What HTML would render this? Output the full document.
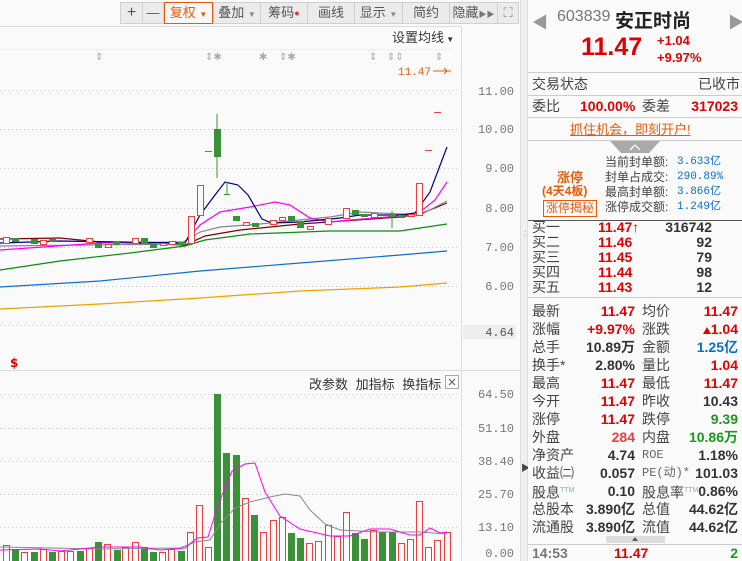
<!DOCTYPE html>
<html><head><meta charset="utf-8"><style>
*{margin:0;padding:0;box-sizing:border-box}
body{width:742px;height:561px;background:#fafafa;font-family:"Liberation Sans","Noto Sans CJK SC",sans-serif;position:relative;overflow:hidden;font-size:13px}
.a{position:absolute;white-space:nowrap}
.tb{position:absolute;top:2px;height:22px;background:#ebebeb;border:1px solid #cfcfcf;font-size:13px;color:#555;text-align:center;line-height:20px}
.r{color:#e00000;font-weight:bold}
.g{color:#1a9a1a;font-weight:bold}
.b{color:#0a6fd0}
.lab{color:#444}
.row{position:absolute;left:532px;width:208px;height:18px;font-size:14px;line-height:18px}
.row span{position:absolute}
.mono{font-family:"Liberation Mono","DejaVu Sans Mono",monospace;color:#666;font-size:12px}
</style></head><body>
<svg class="a" style="left:0;top:0" width="520" height="561" viewBox="0 0 520 561">
<rect x="0" y="0" width="520" height="561" fill="#fafafa"/>
<line x1="0" y1="26.5" x2="461" y2="26.5" stroke="#ddd"/>
<line x1="0" y1="49.5" x2="452" y2="49.5" stroke="#eee"/>
<line x1="461.5" y1="26" x2="461.5" y2="561" stroke="#ddd"/>
<line x1="0" y1="370.5" x2="520" y2="370.5" stroke="#ddd"/>
<g stroke="#c8c8c8" stroke-dasharray="1,3">
<line x1="0" y1="90.5" x2="458" y2="90.5"/><line x1="0" y1="129.5" x2="458" y2="129.5"/><line x1="0" y1="168.5" x2="458" y2="168.5"/><line x1="0" y1="208.5" x2="458" y2="208.5"/><line x1="0" y1="247.5" x2="458" y2="247.5"/><line x1="0" y1="286.5" x2="458" y2="286.5"/><line x1="0" y1="325.5" x2="458" y2="325.5"/>
<line x1="0" y1="394.5" x2="458" y2="394.5"/><line x1="0" y1="428.5" x2="458" y2="428.5"/><line x1="0" y1="461.5" x2="458" y2="461.5"/><line x1="0" y1="494.5" x2="458" y2="494.5"/><line x1="0" y1="527.5" x2="458" y2="527.5"/>
</g>
<g font-family="Liberation Mono,monospace" font-size="12" fill="#777" text-anchor="end">
<text x="514" y="95">11.00</text><text x="514" y="133">10.00</text><text x="514" y="172">9.00</text><text x="514" y="212">8.00</text><text x="514" y="251">7.00</text><text x="514" y="290">6.00</text>
<text x="514" y="398">64.50</text><text x="514" y="432">51.10</text><text x="514" y="465">38.40</text><text x="514" y="498">25.70</text><text x="514" y="531">13.10</text><text x="514" y="557">0.00</text>
</g>
<rect x="463" y="325" width="53" height="14" fill="#eee"/>
<text x="514" y="336" font-family="Liberation Mono,monospace" font-size="12" fill="#555" text-anchor="end">4.64</text>
<g fill="#aaa" font-size="10" font-family="DejaVu Sans">
<text x="95" y="60">⇕</text><text x="205" y="60">⇕✱</text><text x="259" y="60">✱</text><text x="279" y="60">⇕✱</text><text x="369" y="60">⇕</text><text x="387" y="60">⇕⇕</text><text x="435" y="60">⇕</text>
</g>
<text x="398" y="75" font-family="Liberation Mono,monospace" font-size="11" fill="#e85a0a">11.47</text>
<path d="M433 71H451M444 68L447 71L444 74" stroke="#e85a0a" fill="none"/>
<g fill="none" stroke-width="1.2">
<polyline stroke="#f0a000" points="0,309 100,304 200,298 300,291 400,287 447,283"/>
<polyline stroke="#0a70d0" points="0,287 100,281 200,271 300,263 400,255 447,251"/>
<polyline stroke="#108a10" points="0,270 60,261 130,253 185,246 205,240 250,234 330,231 400,231 420,228 447,224"/>
<polyline stroke="#800000" points="0,239 60,238 100,242 185,245 205,236 240,230 300,224 400,217 420,214 447,203"/>
<polyline stroke="#888" points="0,246 180,244 200,232 220,227 260,224 300,220 330,217 360,212 400,214 420,215 447,201"/>
<polyline stroke="#ff00ff" points="0,250 100,243 185,242 200,225 220,212 250,207 275,202 290,205 310,218 330,222 350,220 400,216 420,212 435,200 447,182"/>
<polyline stroke="#000080" points="0,243 60,241 185,243 200,215 215,195 225,182 238,185 248,195 262,219 272,223 300,222 340,218 360,215 400,215 415,213 430,192 447,147"/>
</g>
<g stroke="#e84040" fill="#fafafa">
<rect x="3.5" y="237.5" width="6" height="6"/><rect x="40.5" y="240.5" width="6" height="4"/><rect x="86.5" y="238.5" width="6" height="4"/><rect x="105.5" y="244.5" width="6" height="3"/><rect x="132.5" y="238.5" width="6" height="5"/><rect x="160.5" y="243.5" width="6" height="2"/><rect x="169.5" y="241.5" width="6" height="3"/>
<rect x="188.5" y="216.5" width="6" height="27"/><rect x="197.5" y="185.5" width="6" height="30"/>
<rect x="243.5" y="222.5" width="6" height="3"/><rect x="270.5" y="220.5" width="6" height="4"/><rect x="279.5" y="217.5" width="6" height="3"/><rect x="307.5" y="226.5" width="6" height="3"/><rect x="325.5" y="218.5" width="6" height="6"/><rect x="343.5" y="208.5" width="6" height="10"/><rect x="371.5" y="213.5" width="6" height="4"/><rect x="408.5" y="214.5" width="6" height="2"/><rect x="416.5" y="183.5" width="6" height="32"/>
<line x1="205" y1="151.5" x2="212" y2="151.5"/><line x1="425" y1="150.5" x2="432" y2="150.5"/><line x1="434" y1="112.5" x2="441" y2="112.5"/>
</g>
<g fill="#3a913a" stroke="#3a913a">
<rect x="12.5" y="238.5" width="6" height="3"/><rect x="31.5" y="239.5" width="6" height="4"/><rect x="49.5" y="239.5" width="6" height="2"/><rect x="95.5" y="243.5" width="6" height="4"/><rect x="113.5" y="241.5" width="6" height="3"/><rect x="141.5" y="238.5" width="6" height="5"/><rect x="150.5" y="244.5" width="6" height="3"/><rect x="178.5" y="242.5" width="6" height="2"/>
<line x1="217" y1="114" x2="217" y2="178"/><rect x="214.5" y="129.5" width="6" height="27"/>
<line x1="227" y1="182" x2="227" y2="194"/><line x1="224" y1="194.5" x2="230" y2="194.5"/>
<rect x="233.5" y="216.5" width="6" height="4"/><rect x="252.5" y="223.5" width="6" height="3"/><rect x="288.5" y="216.5" width="6" height="4"/><rect x="297.5" y="221.5" width="6" height="6"/><rect x="352.5" y="210.5" width="6" height="4"/><rect x="361.5" y="214.5" width="6" height="2"/><rect x="389.5" y="214.5" width="6" height="2"/><line x1="392" y1="211" x2="392" y2="228"/><rect x="398.5" y="215.5" width="6" height="2"/>
</g>
<text x="10" y="367" font-size="12" font-weight="bold" fill="#e00000" font-family="DejaVu Sans">$</text>
<g stroke="#e84040" fill="#fafafa">
<rect x="3.5" y="545.5" width="6" height="16"/><rect x="21.5" y="552.5" width="6" height="9"/><rect x="40.5" y="549.5" width="6" height="12"/><rect x="58.5" y="551.5" width="6" height="10"/><rect x="67.5" y="551.5" width="6" height="10"/><rect x="86.5" y="548.5" width="6" height="13"/><rect x="104.5" y="544.5" width="6" height="17"/><rect x="122.5" y="547.5" width="6" height="14"/><rect x="132.5" y="542.5" width="6" height="19"/><rect x="159.5" y="552.5" width="6" height="9"/><rect x="168.5" y="549.5" width="6" height="12"/><rect x="187.5" y="532.5" width="6" height="29"/><rect x="196.5" y="505.5" width="6" height="56"/><rect x="205.5" y="547.5" width="6" height="14"/>
<rect x="242.5" y="498.5" width="6" height="63"/><rect x="260.5" y="532.5" width="6" height="29"/><rect x="270.5" y="520.5" width="6" height="41"/><rect x="279.5" y="517.5" width="6" height="44"/><rect x="306.5" y="543.5" width="6" height="18"/><rect x="315.5" y="541.5" width="6" height="20"/><rect x="325.5" y="525.5" width="6" height="36"/><rect x="334.5" y="536.5" width="6" height="25"/><rect x="343.5" y="512.5" width="6" height="49"/><rect x="370.5" y="530.5" width="6" height="31"/><rect x="398.5" y="543.5" width="6" height="18"/><rect x="407.5" y="539.5" width="6" height="22"/><rect x="416.5" y="501.5" width="6" height="60"/><rect x="425.5" y="547.5" width="6" height="14"/><rect x="434.5" y="540.5" width="6" height="21"/><rect x="444.5" y="532.5" width="6" height="29"/>
</g>
<g fill="#3a913a">
<rect x="12" y="549" width="7" height="12"/><rect x="31" y="552" width="7" height="9"/><rect x="49" y="552" width="7" height="9"/><rect x="77" y="551" width="7" height="10"/><rect x="95" y="542" width="7" height="19"/><rect x="114" y="550" width="7" height="11"/><rect x="141" y="547" width="7" height="14"/><rect x="150" y="552" width="7" height="9"/><rect x="178" y="551" width="7" height="10"/>
<rect x="214" y="394" width="7" height="167"/><rect x="223" y="453" width="7" height="108"/><rect x="233" y="455" width="7" height="106"/><rect x="251" y="515" width="7" height="46"/><rect x="288" y="533" width="7" height="28"/><rect x="297" y="538" width="7" height="23"/><rect x="352" y="533" width="7" height="28"/><rect x="361" y="539" width="7" height="22"/><rect x="379" y="532" width="7" height="29"/><rect x="389" y="532" width="7" height="29"/>
</g>
<g fill="none" stroke-width="1">
<polyline stroke="#888" points="0,547 50,548 100,549 180,548 195,542 210,540 220,524 235,508 250,502 270,497 285,494 300,496 310,510 325,524 340,530 380,532 420,532 447,534"/>
<polyline stroke="#ff00ff" points="0,550 40,549 60,551 100,547 140,547 160,550 185,548 197,538 208,537 214,518 222,495 232,471 245,464 255,463 265,492 280,516 300,529 330,536 350,536 370,529 390,529 410,535 420,535 430,528 440,533 447,532"/>
</g>
<rect x="445.5" y="375.5" width="13" height="13" fill="none" stroke="#aaa"/>
<path d="M449 379L455 385M455 379L449 385" stroke="#555"/>
</svg>
<div class="tb" style="left:120px;width:23px;font-size:16px">+</div>
<div class="tb" style="left:142px;width:22px">—</div>
<div class="tb" style="left:164px;width:49px;border:1px solid #e85a0a;color:#e85a0a;background:#f7f7f7">复权 <span style="font-size:8px">▼</span></div>
<div class="tb" style="left:213px;width:48px">叠加 <span style="font-size:8px;color:#888">▼</span></div>
<div class="tb" style="left:260px;width:48px">筹码<span style="color:#f03030;font-size:9px;vertical-align:top">●</span></div>
<div class="tb" style="left:307px;width:48px">画线</div>
<div class="tb" style="left:354px;width:49px">显示 <span style="font-size:8px;color:#888">▼</span></div>
<div class="tb" style="left:402px;width:48px">简约</div>
<div class="tb" style="left:449px;width:49px">隐藏<span style="font-size:8px;color:#777">▶▶</span></div>
<div class="tb" style="left:497px;width:22px;color:#888">⛶</div>
<div class="a" style="left:392px;top:29px;width:61px;height:18px;background:#fff;font-size:13px;color:#333;line-height:18px">设置均线<span style="font-size:8px"> ▼</span></div>
<div class="a" style="left:309px;top:374px;font-size:13px;color:#333;word-spacing:4px">改参数 加指标 换指标</div>
<div class="a" style="left:520px;top:0;width:8px;height:561px;background:#f0f0f0;border-left:1px solid #ddd;border-right:1px solid #ddd"></div>
<div class="a" style="left:521px;top:230px;font-size:8px;color:#999">⋮</div>
<div class="a" style="left:521px;top:461px;font-size:9px;color:#444">▶</div>
<div class="a" style="left:528px;top:0;width:214px;height:561px;background:#fafafa"></div>
<div class="a" style="left:532px;top:9px;color:#999;font-size:16px">◀</div>
<div class="a" style="left:728px;top:9px;color:#999;font-size:16px">▶</div>
<div class="a" style="left:557px;top:8px;color:#777;font-size:16px">603839</div>
<div class="a" style="left:615px;top:6px;color:#222;font-size:19px;font-weight:bold">安正时尚</div>
<div class="a r" style="left:581px;top:33px;font-size:25px">11.47</div>
<div class="a r" style="left:657px;top:33px;font-size:13px">+1.04</div>
<div class="a r" style="left:657px;top:50px;font-size:13px">+9.97%</div>
<div class="a" style="left:528px;top:72px;width:214px;border-top:1px solid #ccc"></div>
<div class="row" style="top:75px"><span class="lab" style="left:0">交易状态</span><span class="lab" style="right:0">已收市</span></div>
<div class="a" style="left:528px;top:95px;width:214px;border-top:1px solid #ccc"></div>
<div class="row" style="top:97px"><span class="lab" style="left:0">委比</span><span class="r" style="left:48px">100.00%</span><span class="lab" style="left:110px">委差</span><span class="r" style="right:2px">317023</span></div>
<div class="a" style="left:528px;top:117px;width:214px;border-top:1px solid #ccc"></div>
<div class="a" style="left:570px;top:119px;color:#e85a0a;font-size:13px;text-decoration:underline">抓住机会，即刻开户!</div>
<div class="a" style="left:528px;top:140px;width:214px;border-top:1px solid #ccc"></div>
<div class="a" style="left:610px;top:141px;width:50px;height:12px;background:#aaa;clip-path:polygon(0 0,100% 0,78% 100%,22% 100%)"></div>
<svg class="a" style="left:628px;top:143px" width="14" height="8"><path d="M2 7L7 2L12 7" stroke="#fff" fill="none" stroke-width="1.3"/></svg>
<div class="a" style="left:557px;top:167px;color:#e85a0a;font-weight:bold;font-size:13px">涨停</div>
<div class="a" style="left:542px;top:182px;color:#e85a0a;font-weight:bold;font-size:12px">(4天4板)</div>
<div class="a" style="left:543px;top:200px;border:1px solid #e85a0a;color:#e85a0a;font-size:12px;padding:0 2px;line-height:15px">涨停揭秘</div>
<div class="a" style="left:605px;top:155px;font-size:12px;color:#444;line-height:15px">当前封单额:<br>封单占成交:<br>最高封单额:<br>涨停成交额:</div>
<div class="a b" style="left:677px;top:155px;font-size:11px;line-height:15px;font-family:'Liberation Mono',monospace">3.633亿<br>290.89%<br>3.866亿<br>1.249亿</div>
<div class="a" style="left:528px;top:220px;width:214px;border-top:1px solid #555"></div>
<div class="row" style="top:220px;height:15px;line-height:15px"><span class="lab" style="left:0">买一</span><span class="r" style="left:66px">11.47<span style="font-weight:normal">↑</span></span><span style="right:28px;color:#333;font-weight:bold">316742</span></div>
<div class="row" style="top:235px;height:15px;line-height:15px"><span class="lab" style="left:0">买二</span><span class="r" style="left:66px">11.46</span><span style="right:28px;color:#333;font-weight:bold">92</span></div>
<div class="row" style="top:250px;height:15px;line-height:15px"><span class="lab" style="left:0">买三</span><span class="r" style="left:66px">11.45</span><span style="right:28px;color:#333;font-weight:bold">79</span></div>
<div class="row" style="top:265px;height:15px;line-height:15px"><span class="lab" style="left:0">买四</span><span class="r" style="left:66px">11.44</span><span style="right:28px;color:#333;font-weight:bold">98</span></div>
<div class="row" style="top:280px;height:15px;line-height:15px"><span class="lab" style="left:0">买五</span><span class="r" style="left:66px">11.43</span><span style="right:28px;color:#333;font-weight:bold">12</span></div>
<div class="a" style="left:528px;top:297px;width:214px;border-top:1px solid #ccc"></div>
<div class="row" style="top:302px"><span class="lab" style="left:0">最新</span><span class="r" style="right:105px">11.47</span><span class="lab" style="left:110px">均价</span><span class="r" style="right:2px">11.47</span></div>
<div class="row" style="top:320px"><span class="lab" style="left:0">涨幅</span><span class="r" style="right:105px">+9.97%</span><span class="lab" style="left:110px">涨跌</span><span class="r" style="right:2px"><svg width="8" height="8" style="vertical-align:0"><path d="M0 8L4 1L8 8Z" fill="#e00000"/></svg>1.04</span></div>
<div class="row" style="top:338px"><span class="lab" style="left:0">总手</span><span style="right:105px;color:#333;font-weight:bold">10.89万</span><span class="lab" style="left:110px">金额</span><span class="b" style="right:2px;font-weight:bold">1.25亿</span></div>
<div class="row" style="top:356px"><span class="lab" style="left:0">换手*</span><span style="right:105px;color:#333;font-weight:bold">2.80%</span><span class="lab" style="left:110px">量比</span><span class="r" style="right:2px">1.04</span></div>
<div class="row" style="top:374px"><span class="lab" style="left:0">最高</span><span class="r" style="right:105px">11.47</span><span class="lab" style="left:110px">最低</span><span class="r" style="right:2px">11.47</span></div>
<div class="row" style="top:392px"><span class="lab" style="left:0">今开</span><span class="r" style="right:105px">11.47</span><span class="lab" style="left:110px">昨收</span><span style="right:2px;color:#333;font-weight:bold">10.43</span></div>
<div class="row" style="top:410px"><span class="lab" style="left:0">涨停</span><span class="r" style="right:105px">11.47</span><span class="lab" style="left:110px">跌停</span><span class="g" style="right:2px">9.39</span></div>
<div class="row" style="top:428px"><span class="lab" style="left:0">外盘</span><span style="right:105px;color:#e84040;font-weight:bold">284</span><span class="lab" style="left:110px">内盘</span><span class="g" style="right:2px">10.86万</span></div>
<div class="row" style="top:446px"><span class="lab" style="left:0">净资产</span><span style="right:105px;color:#333;font-weight:bold">4.74</span><span class="mono" style="left:110px">ROE</span><span style="right:2px;color:#333;font-weight:bold">1.18%</span></div>
<div class="row" style="top:464px"><span class="lab" style="left:0">收益㈡</span><span style="right:105px;color:#333;font-weight:bold">0.057</span><span class="mono" style="left:110px">PE(动)*</span><span style="right:2px;color:#333;font-weight:bold">101.03</span></div>
<div class="row" style="top:482px"><span class="lab" style="left:0">股息<sup style="font-size:7px;color:#8ab">TTM</sup></span><span style="right:105px;color:#333;font-weight:bold">0.10</span><span class="lab" style="left:110px">股息率<sup style="font-size:7px;color:#8ab">TTM</sup></span><span style="right:2px;color:#333;font-weight:bold">0.86%</span></div>
<div class="row" style="top:500px"><span class="lab" style="left:0">总股本</span><span style="right:105px;color:#333;font-weight:bold">3.890亿</span><span class="lab" style="left:110px">总值</span><span style="right:2px;color:#333;font-weight:bold">44.62亿</span></div>
<div class="row" style="top:518px"><span class="lab" style="left:0">流通股</span><span style="right:105px;color:#333;font-weight:bold">3.890亿</span><span class="lab" style="left:110px">流值</span><span style="right:2px;color:#333;font-weight:bold">44.62亿</span></div>
<div class="a" style="left:606px;top:536px;width:59px;height:7px;background:#ddd"></div>
<svg class="a" style="left:632px;top:537px" width="6" height="4"><path d="M0 4L3 0L6 4Z" fill="#555"/></svg>
<div class="a" style="left:528px;top:544px;width:214px;border-top:1px solid #ccc"></div>
<div class="row" style="top:546px;height:15px;line-height:15px"><span style="left:0;color:#777;font-weight:bold">14:53</span><span class="r" style="left:82px">11.47</span><span class="g" style="right:2px">2</span></div>
</body></html>
